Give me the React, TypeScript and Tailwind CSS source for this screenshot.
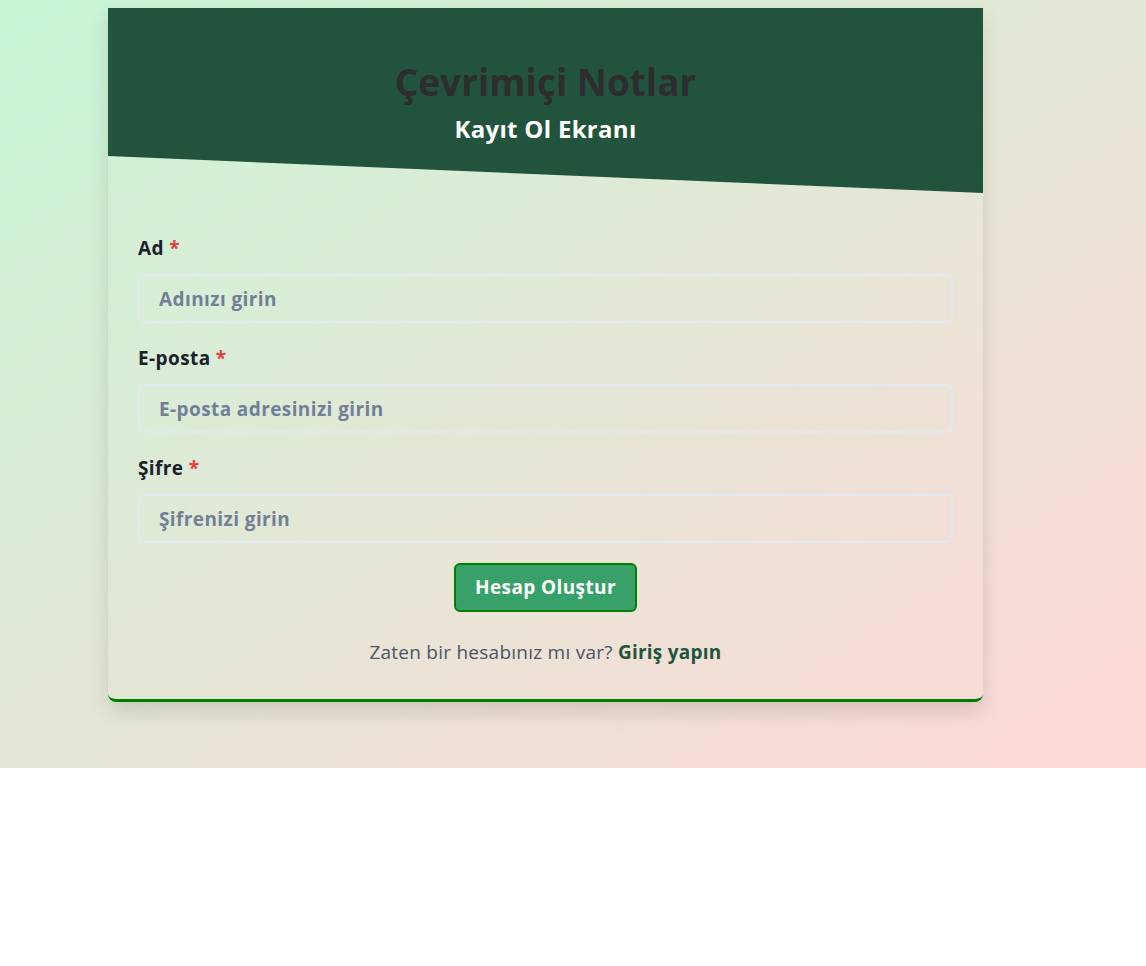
import React from "react";

const font = { fontFamily: '"Open Sans", "Noto Sans", Arial, sans-serif' };

function Field({ label, placeholder, type }: { label: string; placeholder: string; type: string }) {
  return (
    <div className="flex flex-col">
      <label className="text-[19px] leading-[27px] font-bold tracking-[0.4px] text-[#1a202c]">
        {label} <span className="text-[#e53e3e]">*</span>
      </label>
      <input
        type={type}
        placeholder={placeholder}
        className="mt-[12px] h-[49px] w-full rounded-md border-2 border-[#e2e8f0] bg-transparent px-[19px] text-[19px] font-bold tracking-[0.4px] text-[#1a202c] placeholder:text-[#718096] outline-none"
        style={font}
      />
    </div>
  );
}

export default function App() {
  return (
    <div
      className="h-[768px] w-full bg-gradient-to-br from-[#c6f6d5] to-[#fed7d7] pt-2"
      style={font}
    >
      <div className="ml-[108px] w-[875px] rounded-b-lg border-b-[3px] border-[#008000] shadow-[0_10px_20px_rgba(0,0,0,0.12)]">
        <div
          className="h-[185px] bg-[#22543d] pt-[52px] text-center"
          style={{ clipPath: "polygon(0 0, 100% 0, 100% 100%, 0 80%)" }}
        >
          <h1 className="text-[37px] leading-[44px] font-bold text-[#2d2d2d]">Çevrimiçi Notlar</h1>
          <h2 className="mt-[10px] text-[24px] leading-[29px] font-bold tracking-[0.3px] text-white">Kayıt Ol Ekranı</h2>
        </div>
        <div className="px-[30px] pt-[42px] pb-[33px]">
          <div className="flex flex-col gap-[22px]">
            <Field label="Ad" placeholder="Adınızı girin" type="text" />
            <Field label="E-posta" placeholder="E-posta adresinizi girin" type="email" />
            <Field label="Şifre" placeholder="Şifrenizi girin" type="password" />
          </div>
          <div className="mt-[20px] flex justify-center">
            <button
              className="h-[49px] w-[183px] rounded-md border-2 border-[#008000] bg-[#38a169] text-[19px] font-bold tracking-[0.4px] text-white"
              style={font}
            >
              Hesap Oluştur
            </button>
          </div>
          <p className="mt-[27px] text-center text-[19px] leading-[27px] tracking-[0.25px] text-[#4a5568]">
            Zaten bir hesabınız mı var?{" "}
            <a href="#" className="font-bold text-[#22543d]">
              Giriş yapın
            </a>
          </p>
        </div>
      </div>
    </div>
  );
}
